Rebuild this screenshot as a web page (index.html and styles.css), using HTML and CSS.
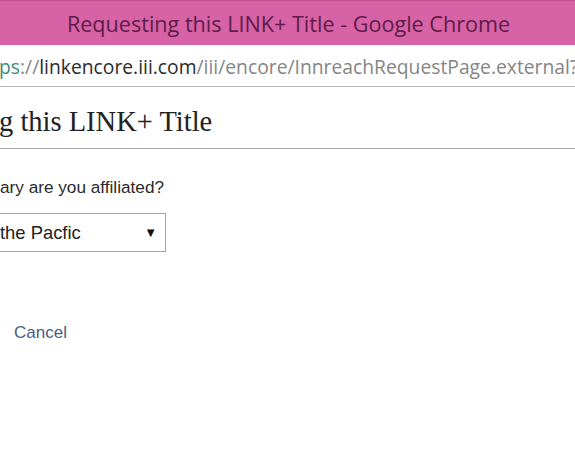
FILE: index.html
```
<!DOCTYPE html>
<html>
<head>
<meta charset="utf-8">
<link rel="stylesheet" href="styles.css">
</head>
<body>
<div class="window">
  <div class="titlebar"><span class="title">Requesting this LINK+ Title - Google Chrome</span></div>
  <div class="urlbar"><span class="scheme">ps</span><span class="dim">://</span><span class="host">linkencore.iii.com</span><span class="dim">/iii/encore/InnreachRequestPage.external?</span></div>
  <div class="page">
    <h1 class="heading">g this LINK+ Title</h1>
    <div class="form">
      <div class="label">ary are you affiliated?</div>
      <div class="select"><span class="select-text">the Pacfic</span><span class="arrow">▼</span></div>
      <a class="cancel" href="#">Cancel</a>
    </div>
  </div>
</div>
</body>
</html>
```
FILE: styles.css
```
html, body {
  margin: 0;
  padding: 0;
  background: #ffffff;
}
.window {
  width: 575px;
  height: 475px;
  overflow: hidden;
  background: #ffffff;
}
.titlebar {
  height: 45px;
  background: #d762a5;
  border-top: 1px solid #c25090;
  display: flex;
  align-items: center;
  justify-content: center;
  box-sizing: border-box;
  padding-left: 2px;
}
.title {
  font-family: "Open Sans", "Noto Sans", sans-serif;
  font-size: 21.6px;
  color: #5e1d4a;
  white-space: nowrap;
}
.urlbar {
  height: 42px;
  box-sizing: border-box;
  border-bottom: 1px solid #b5b5b5;
  display: flex;
  align-items: center;
  white-space: nowrap;
  overflow: hidden;
  font-family: "Open Sans", "Noto Sans", sans-serif;
  font-size: 19.3px;
  color: #7a7a7a;
  margin-left: -1px;
  padding-top: 1px;
}
.scheme { color: #3d8d74; }
.dim { color: #858585; }
.host { color: #2b2b2b; }
.page {
  padding-top: 19px;
}
.heading {
  margin: 0;
  font-family: "Liberation Serif", "DejaVu Serif", serif;
  font-weight: normal;
  font-size: 28.5px;
  line-height: 32px;
  color: #222222;
  padding-bottom: 10px;
  border-bottom: 1px solid #ababab;
  margin-left: -1px;
}
.form {
  display: flex;
  flex-direction: column;
  align-items: flex-start;
}
.label {
  margin-top: 28px;
  font-family: "Liberation Sans", Arial, sans-serif;
  font-size: 17.2px;
  line-height: 20px;
  color: #2a2a2a;
}
.select {
  margin-top: 16px;
  width: 167px;
  height: 39px;
  box-sizing: border-box;
  margin-left: -1px;
  border: 1px solid #a6a6a6;
  display: flex;
  align-items: center;
  justify-content: space-between;
  padding-right: 8px;
  font-family: "Liberation Sans", Arial, sans-serif;
  font-size: 18.4px;
  color: #222222;
}
.arrow {
  font-size: 13px;
  color: #111111;
}
.cancel {
  margin-top: 71px;
  margin-left: 14px;
  font-family: "Liberation Sans", Arial, sans-serif;
  font-size: 17px;
  color: #4a5d82;
  text-decoration: none;
}
```
